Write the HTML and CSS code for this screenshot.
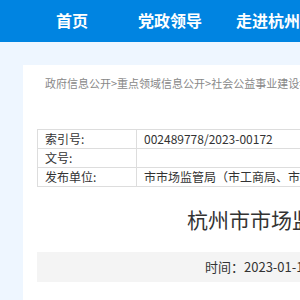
FILE: index.html
```html
<!DOCTYPE html>
<html lang="zh-CN">
<head>
<meta charset="utf-8">
<title>杭州市市场监督管理局</title>
<link rel="stylesheet" href="styles.css">
</head>
<body>
<header class="topbar">
  <nav class="nav">
    <a class="nav-item">首页</a>
    <a class="nav-item">党政领导</a>
    <a class="nav-item">走进杭州</a>
    <a class="nav-item">政务服务</a>
  </nav>
</header>
<main class="main">
  <section class="panel">
    <div class="crumbs">政府信息公开&gt;重点领域信息公开&gt;社会公益事业建设&gt;食品药品安全</div>
    <table class="meta">
      <tr><td class="label">索引号:</td><td class="value">002489778/2023-00172</td></tr>
      <tr><td class="label">文号:</td><td class="value"></td></tr>
      <tr><td class="label">发布单位:</td><td class="value">市市场监管局（市工商局、市质监局、市食药监局）</td></tr>
    </table>
    <h1 class="title">杭州市市场监督管理局关于食品安全监督抽检信息的通告</h1>
    <div class="timebar">时间：2023-01-11</div>
  </section>
</main>
</body>
</html>
```
FILE: styles.css
```css
html, body {
  margin: 0;
  padding: 0;
  overflow: hidden;
}
body {
  background: #eef6ff;
  font-family: "Noto Sans CJK SC", "Noto Sans", sans-serif;
  color: #333;
}
.topbar {
  height: 42px;
  background: #0084e1;
}
.nav {
  display: flex;
  padding-left: 23px;
  width: 1200px;
}
.nav-item {
  width: 98px;
  text-align: center;
  line-height: 40px;
  font-size: 16px;
  font-weight: bold;
  color: #fff;
  flex: none;
}
.main {
  padding: 23px 0 0 23px;
}
.panel {
  background: #fff;
  width: 1200px;
  padding: 0 14px 20px;
}
.crumbs {
  padding: 10px 0 0 8px;
  line-height: 16px;
  font-size: 11px;
  color: #888;
  white-space: nowrap;
}
.meta {
  margin-top: 38px;
  border-collapse: collapse;
  width: 1000px;
  font-size: 12px;
  color: #333;
}
.meta td {
  border: 1px solid #ddd;
  height: 18px;
  line-height: 18px;
  padding: 0 7px;
  white-space: nowrap;
}
.meta .label {
  width: 84px;
}
.title {
  margin: 17px 0 0;
  padding-left: 150px;
  font-size: 21px;
  font-weight: normal;
  line-height: 30px;
  color: #333;
  white-space: nowrap;
}
.timebar {
  margin-top: 18px;
  height: 30px;
  line-height: 30px;
  background: #f4f4f4;
  padding-left: 168px;
  font-size: 13px;
  color: #333;
  width: 832px;
}
```
